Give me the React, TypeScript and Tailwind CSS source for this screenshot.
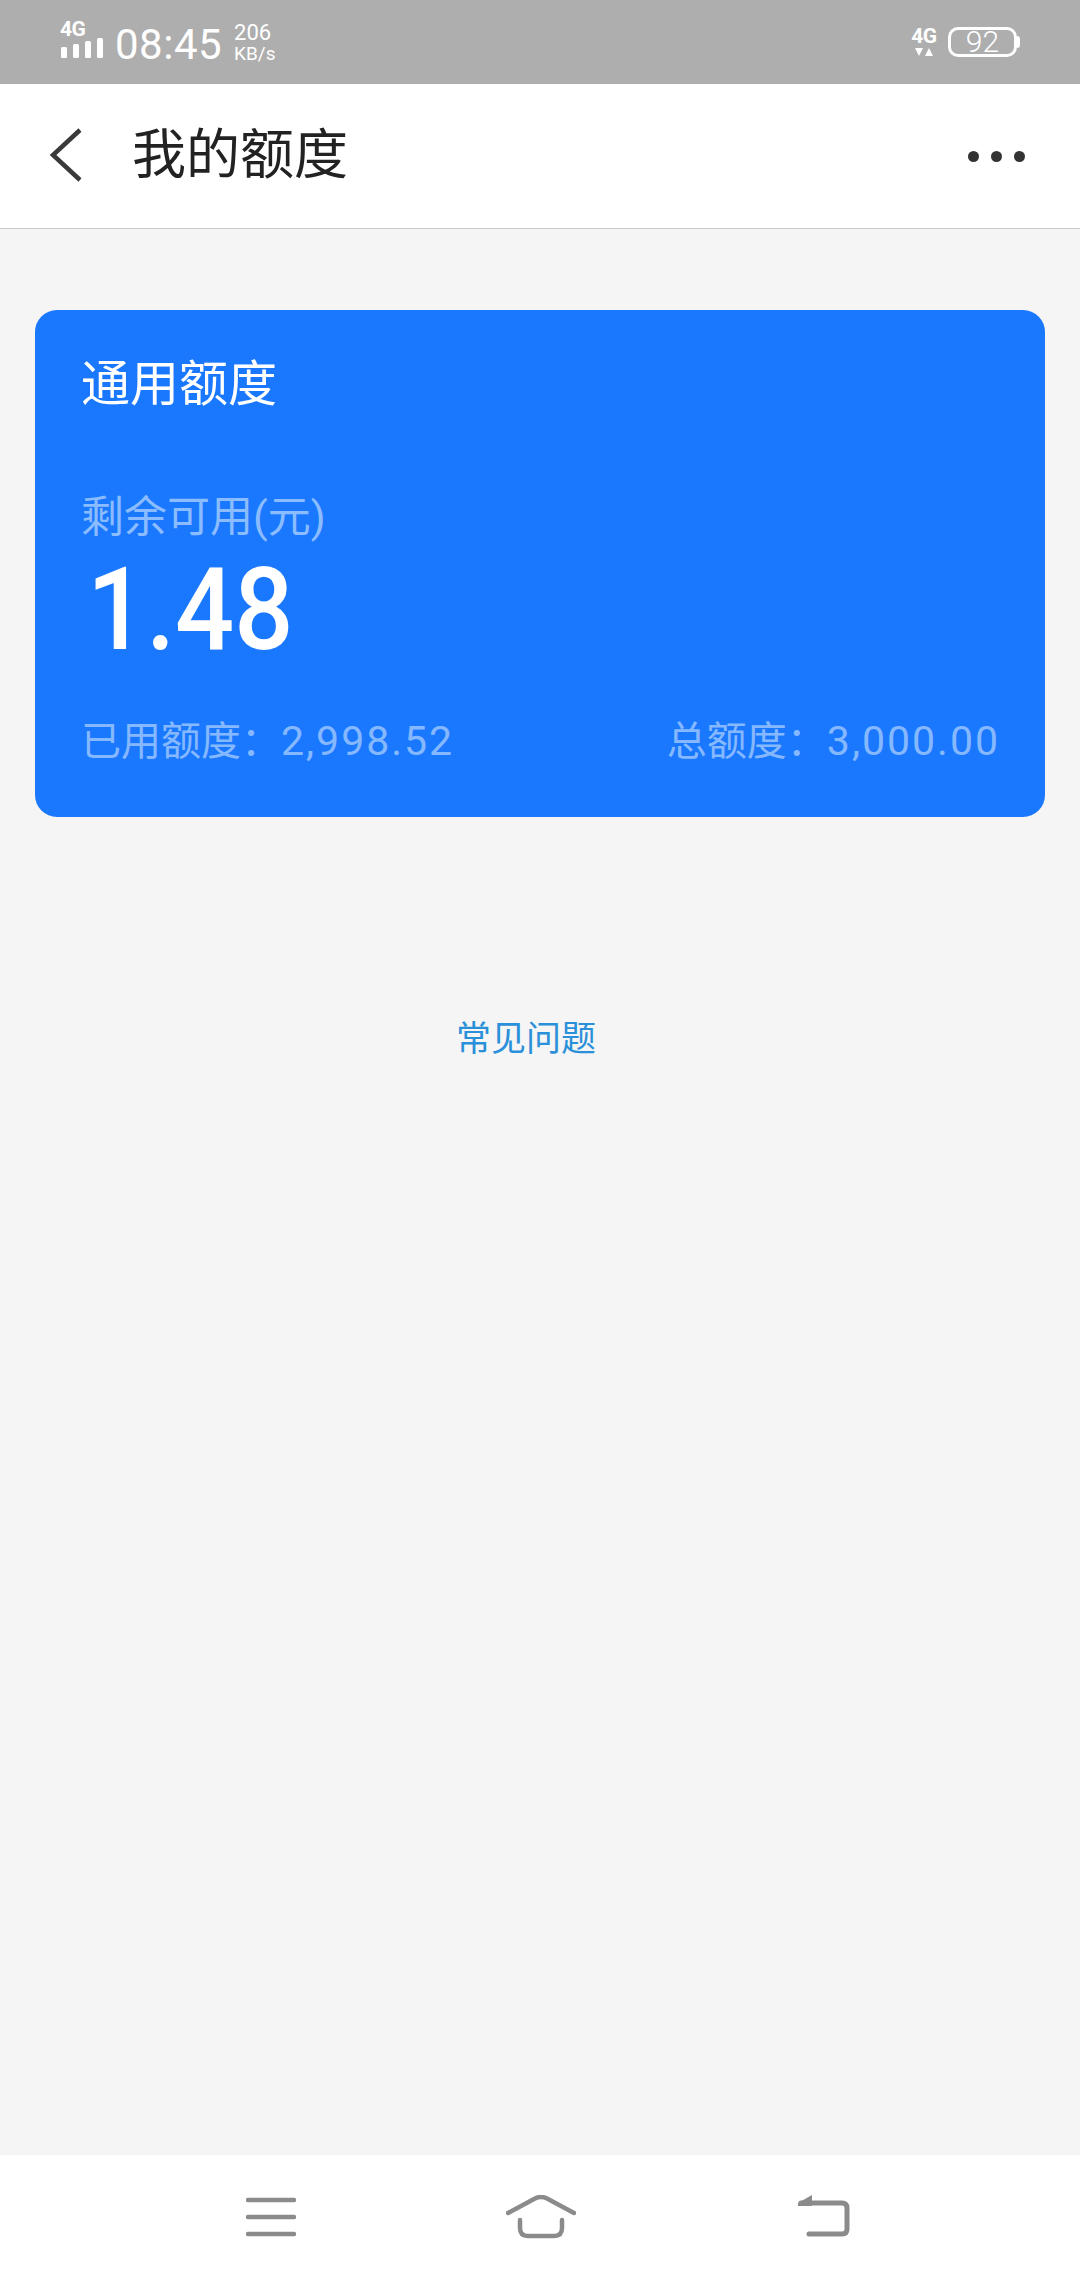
const cjk = 'font-["Roboto","Noto_Sans_CJK_SC",sans-serif]';

function StatusBar() {
  return (
    <div className="flex h-[84px] items-start justify-between bg-[#aeaeae] pl-[60px] pr-[60px] text-white">
      <div className="flex items-start">
        <div className="flex w-[44px] flex-col pt-[20px]">
          <span className="h-[18px] text-[21px] leading-[18px] font-bold tracking-[-0.5px]">4G</span>
          <svg width="44" height="20" viewBox="0 0 44 20" fill="#fff">
            <rect x="1" y="9" width="6" height="11" rx="1.5" />
            <rect x="13" y="6" width="6" height="14" rx="1.5" />
            <rect x="25" y="3" width="6" height="17" rx="1.5" />
            <rect x="37" y="0" width="6" height="20" rx="1.5" />
          </svg>
        </div>
        <span className="ml-[11px] pt-[21px] text-[42px] leading-[48px] tracking-[0.5px]">08:45</span>
        <div className="ml-[12px] flex flex-col pt-[22px]">
          <span className="text-[22px] leading-[22px]">206</span>
          <span className="text-[19px] leading-[19px]">KB/s</span>
        </div>
      </div>
      <div className="flex items-start pt-[27px]">
        <div className="flex w-[26px] flex-col items-center">
          <span className="h-[18px] text-[21px] leading-[18px] font-bold tracking-[-0.5px]">4G</span>
          <svg width="20" height="10" viewBox="0 0 20 10" fill="#fff" className="mt-[2px]">
            <polygon points="1,1 9,1 5,9" />
            <polygon points="11,9 19,9 15,1" />
          </svg>
        </div>
        <div className="ml-[11px] flex items-center">
          <div className="flex h-[30px] w-[69px] items-center justify-center rounded-[10px] border-[3px] border-white text-[30px] leading-none font-light">
            92
          </div>
          <div className="h-[12px] w-[3px] rounded-r-[3px] bg-white" />
        </div>
      </div>
    </div>
  );
}

function Header() {
  return (
    <div className="flex h-[145px] items-center border-b border-[#c9c9c9] bg-white pr-[55px] pl-[48px]">
      <svg width="36" height="56" viewBox="0 0 36 56" fill="none" stroke="#3a3a3a" strokeWidth="4.5">
        <polyline points="32,2 5,27 32,52" />
      </svg>
      <span className="ml-[48px] flex-1 text-[54px] leading-none text-[#222222]">我的额度</span>
      <div className="flex gap-[12px]">
        <div className="h-[11px] w-[11px] rounded-full bg-[#333333]" />
        <div className="h-[11px] w-[11px] rounded-full bg-[#333333]" />
        <div className="h-[11px] w-[11px] rounded-full bg-[#333333]" />
      </div>
    </div>
  );
}

function QuotaCard() {
  return (
    <div className="mx-[35px] mt-[81px] flex h-[507px] flex-col rounded-[22px] bg-[#1a78ff] pt-[45px] pr-[45px] pl-[46px]">
      <div className="text-[49px] leading-[60px] text-white">通用额度</div>
      <div className="mt-[76px] text-[43px] leading-[52px] text-[#8bbcff]">剩余可用(元)</div>
      <div className="mt-[22px] ml-[6px] origin-left scale-x-[0.905] text-[115px] leading-[90px] font-medium text-white">1.48</div>
      <div className="mt-[61px] flex items-center justify-between text-[40px] leading-[50px] text-[#86b8ff]">
        <span>
          已用额度：<span className="text-[41px] tracking-[2px]">2,998.52</span>
        </span>
        <span>
          总额度：<span className="text-[41px] tracking-[2px]">3,000.00</span>
        </span>
      </div>
    </div>
  );
}

function NavBar() {
  return (
    <div className="flex h-[125px] items-start bg-white pt-[40px] pl-[246px]">
      <svg width="50" height="44" viewBox="0 0 50 44" fill="none" stroke="#8b8b8b" strokeWidth="4.5" strokeLinecap="round">
        <line x1="2" y1="5" x2="48" y2="5" />
        <line x1="2" y1="22" x2="48" y2="22" />
        <line x1="2" y1="39" x2="48" y2="39" />
      </svg>
      <svg width="70" height="44" viewBox="0 0 70 44" fill="none" stroke="#8b8b8b" strokeWidth="4.5" strokeLinecap="round" strokeLinejoin="round" className="ml-[210px]">
        <path d="M2 18 L29 3.5 Q35 0.5 41 3.5 L68 18" />
        <path d="M14 25 V33 Q14 41 22 41 H48 Q56 41 56 33 V25" />
      </svg>
      <svg width="52" height="44" viewBox="0 0 52 44" fill="none" className="ml-[222px]">
        <path d="M3 8 H44 Q49 8 49 13 V34 Q49 39 44 39 H11" stroke="#8b8b8b" strokeWidth="5" strokeLinecap="round" />
        <polygon points="0,8 14,0 14,11 0,11" fill="#8b8b8b" />
      </svg>
    </div>
  );
}

export default function App() {
  return (
    <div className={`flex h-[2280px] w-[1080px] flex-col bg-[#f5f5f5] ${cjk}`}>
      <StatusBar />
      <Header />
      <div className="flex flex-1 flex-col">
        <QuotaCard />
        <div className="mt-[201px] pr-[28px] text-center text-[35px] leading-[44px] text-[#2a90d9]">常见问题</div>
      </div>
      <NavBar />
    </div>
  );
}
